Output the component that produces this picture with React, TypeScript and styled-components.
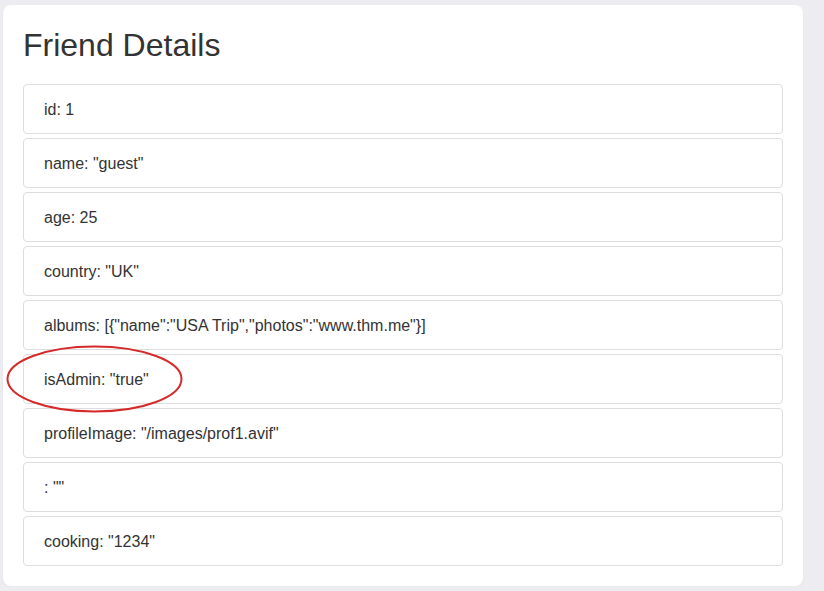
import React from "react";
import styled, { createGlobalStyle } from "styled-components";

const GlobalStyle = createGlobalStyle`
  html, body {
    margin: 0;
    padding: 0;
    background: #ededf1;
    font-family: "Liberation Sans", Arial, sans-serif;
  }
  body {
    padding: 5px 0 0 3px;
  }
`;

const Card = styled.div`
  position: relative;
  box-sizing: border-box;
  width: 800px;
  height: 581px;
  background: #ffffff;
  border-radius: 8px;
  padding: 20px 20px 0 20px;
  box-shadow: 0 1px 3px rgba(0, 0, 0, 0.04);
`;

const Title = styled.h1`
  margin: 0 0 19px 0;
  padding-top: 1px;
  font-size: 32px;
  line-height: 39px;
  font-weight: 400;
  color: #333333;
`;

const List = styled.ul`
  list-style: none;
  margin: 0;
  padding: 0;
  display: flex;
  flex-direction: column;
  gap: 4px;
`;

const Item = styled.li`
  box-sizing: border-box;
  height: 50px;
  display: flex;
  align-items: center;
  padding: 1px 20px 0 20px;
  border: 1px solid #dddddd;
  border-radius: 4px;
  font-size: 16px;
  color: #333333;
`;

const Annotation = styled.svg`
  position: absolute;
  left: 0;
  top: 336px;
  pointer-events: none;
`;

const rows = [
  "id: 1",
  'name: "guest"',
  "age: 25",
  'country: "UK"',
  'albums: [{"name":"USA Trip","photos":"www.thm.me"}]',
  'isAdmin: "true"',
  'profileImage: "/images/prof1.avif"',
  ': ""',
  'cooking: "1234"',
];

export default function App() {
  return (
    <>
      <GlobalStyle />
      <Card>
        <Title>Friend Details</Title>
        <List>
          {rows.map((r, i) => (
            <Item key={i}>{r}</Item>
          ))}
        </List>
        <Annotation width="190" height="80" viewBox="0 0 190 80">
          <ellipse cx="91.5" cy="38" rx="87" ry="32.5" fill="none" stroke="#d62a2a" strokeWidth="2" />
        </Annotation>
      </Card>
    </>
  );
}
